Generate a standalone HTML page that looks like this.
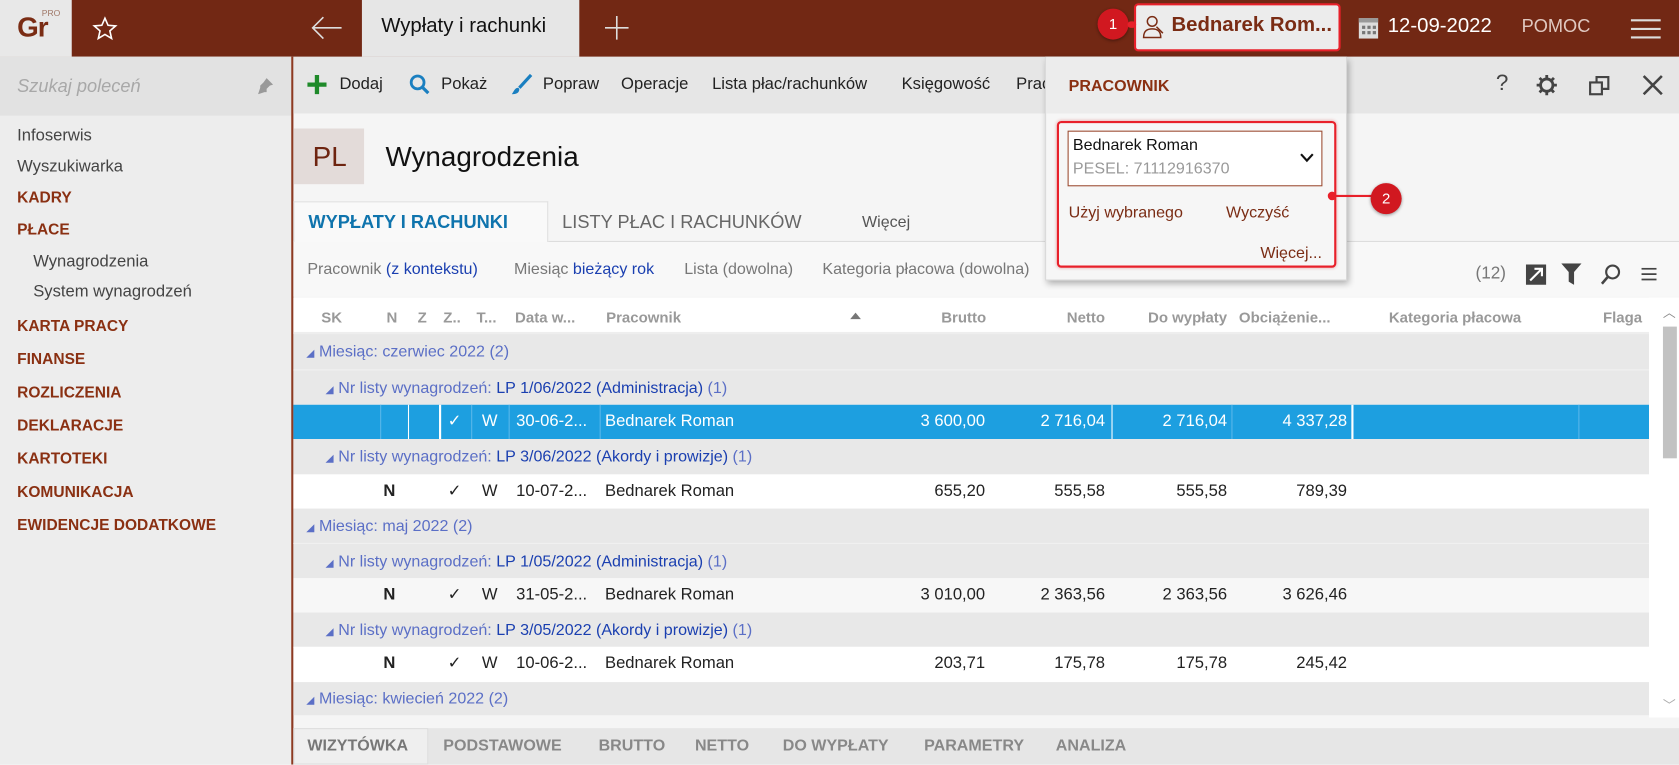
<!DOCTYPE html>
<html><head><meta charset="utf-8"><style>
*{box-sizing:border-box;margin:0;padding:0}
html,body{width:1679px;height:764px;overflow:hidden;background:#f5f5f5}
#w{position:absolute;left:0;top:0;width:1568px;height:714px;transform:scale(1.07079);transform-origin:0 0;font-family:"Liberation Sans",sans-serif;color:#222;background:#f5f5f5}
.a{position:absolute;white-space:nowrap}
.top{left:0;top:0;width:1568px;height:53px;background:#722814}
.sb{left:0;top:53px;width:272px;height:661px;background:#ededed}
.br{color:#8a3012;font-size:14.5px;font-weight:bold}
.g{color:#444;font-size:15.5px}
.hd{font-size:14px;color:#999;font-weight:bold}
.row{position:absolute;left:274px;width:1266px;height:33px}
.grp{background:#e8e8e8;color:#5b6fc6;font-size:15px;line-height:33px}
.grp b{font-weight:normal;color:#1a3fb0}
.cell{position:absolute;top:0;line-height:32px;font-size:15.5px}
.r{text-align:right}
</style></head><body><div id="w">
<div class="a top"></div>
<div class="a" style="left:0;top:0;width:67px;height:53px;background:#e8e8e8"></div>
<div class="a" style="left:16px;top:10px;font-size:26px;color:#7a2c14;font-weight:bold;letter-spacing:-1px">Gr</div>
<div class="a" style="left:39px;top:8px;font-size:8px;color:#a07868">PRO</div>
<svg class="a" style="left:86px;top:15px" width="24" height="24" viewBox="0 0 24 24"><path d="M12 2l2.9 6.6 7.1.6-5.4 4.7 1.6 7-6.2-3.7-6.2 3.7 1.6-7L2 9.2l7.1-.6z" fill="none" stroke="#fff" stroke-width="1.5"/></svg>
<svg class="a" style="left:289px;top:14px" width="32" height="24" viewBox="0 0 32 24"><path d="M30 12H3M13 2L3 12l10 10" fill="none" stroke="#ddd" stroke-width="1.5"/></svg>
<div class="a" style="left:338px;top:0;width:203px;height:53px;background:#e6e6e6"></div>
<div class="a" style="left:356px;top:14px;font-size:19px;color:#111">Wypłaty i rachunki</div>
<svg class="a" style="left:564px;top:14px" width="24" height="24"><path d="M12 1v22M1 12h22" stroke="#ddd" stroke-width="1.5"/></svg>
<div class="a" style="left:1059px;top:3px;width:193px;height:45px;background:#ececec;border:2px solid #e8202a;border-radius:4px"></div>
<svg class="a" style="left:1066px;top:13px" width="22" height="24" viewBox="0 0 22 24"><circle cx="10" cy="7" r="4.5" fill="none" stroke="#7a2c14" stroke-width="1.4"/><path d="M2 22c0-6 3-8 8-8s8 2 8 8z" fill="none" stroke="#7a2c14" stroke-width="1.4"/><path d="M14 12l6 6" stroke="#7a2c14" stroke-width="1.4"/></svg>
<div class="a" style="left:1094px;top:13px;font-size:19px;font-weight:bold;color:#7a2c14">Bednarek Rom...</div>
<div class="a" style="left:1025px;top:8px;width:29px;height:29px;border-radius:50%;background:#d11820;color:#fff;font-size:14px;text-align:center;line-height:29px;box-shadow:0 1px 3px #0006">1</div>
<div class="a" style="left:1053px;top:20px;width:8px;height:6px;background:#e8202a;border-radius:3px"></div>
<svg class="a" style="left:1268px;top:15px" width="20" height="22"><rect x="1" y="2" width="18" height="19" fill="#ddd"/><rect x="1" y="2" width="18" height="4" fill="#999"/><g fill="#777"><rect x="4" y="9" width="3" height="3"/><rect x="9" y="9" width="3" height="3"/><rect x="14" y="9" width="3" height="3"/><rect x="4" y="14" width="3" height="3"/><rect x="9" y="14" width="3" height="3"/><rect x="14" y="14" width="3" height="3"/></g></svg>
<div class="a" style="left:1296px;top:14px;font-size:19px;color:#fff">12-09-2022</div>
<div class="a" style="left:1421px;top:15px;font-size:17px;color:#e0c8c0">POMOC</div>
<svg class="a" style="left:1523px;top:17px" width="28" height="20"><path d="M0 2h28M0 10h28M0 18h28" stroke="#ddd" stroke-width="2"/></svg>

<div class="a sb"></div>
<div class="a" style="left:0;top:53px;width:272px;height:55px;background:#e2e2e2"></div>
<div class="a" style="left:16px;top:71px;font-size:17px;color:#a8a8a8;font-style:italic">Szukaj poleceń</div>
<svg class="a" style="left:240px;top:72px" width="16" height="16"><path d="M9 1l6 6-3 1-3 3 0 3-2 0-6 2 2-6 0-2 3-3z" fill="#999"/></svg>
<div class="a" style="left:272px;top:53px;width:2px;height:661px;background:#8d3a22"></div>
<div class="a g" style="left:16px;top:118px">Infoserwis</div>
<div class="a g" style="left:16px;top:147px">Wyszukiwarka</div>
<div class="a br" style="left:16px;top:177px">KADRY</div>
<div class="a br" style="left:16px;top:207px">PŁACE</div>
<div class="a g" style="left:31px;top:236px">Wynagrodzenia</div>
<div class="a g" style="left:31px;top:264px">System wynagrodzeń</div>
<div class="a br" style="left:16px;top:297px">KARTA PRACY</div>
<div class="a br" style="left:16px;top:328px">FINANSE</div>
<div class="a br" style="left:16px;top:359px">ROZLICZENIA</div>
<div class="a br" style="left:16px;top:390px">DEKLARACJE</div>
<div class="a br" style="left:16px;top:421px">KARTOTEKI</div>
<div class="a br" style="left:16px;top:452px">KOMUNIKACJA</div>
<div class="a br" style="left:16px;top:483px">EWIDENCJE DODATKOWE</div>

<div class="a" style="left:274px;top:53px;width:1294px;height:53px;background:#e6e6e6"></div>
<svg class="a" style="left:287px;top:70px" width="18" height="18"><path d="M9 0v18M0 9h18" stroke="#1f8a2a" stroke-width="4"/></svg>
<div class="a" style="left:317px;top:70px;font-size:15.5px">Dodaj</div>
<svg class="a" style="left:382px;top:69px" width="20" height="20"><circle cx="8" cy="8" r="6" fill="none" stroke="#1a7fc0" stroke-width="2.6"/><path d="M12 12l6 6" stroke="#1a7fc0" stroke-width="3"/></svg>
<div class="a" style="left:412px;top:70px;font-size:15.5px">Pokaż</div>
<svg class="a" style="left:476px;top:68px" width="22" height="22"><path d="M20 2L9 14" stroke="#1a7fc0" stroke-width="3"/><path d="M8 14c-3 0-4 3-6 6 4 0 7-1 7-5z" fill="#1a7fc0"/></svg>
<div class="a" style="left:507px;top:70px;font-size:15.5px">Popraw</div>
<div class="a" style="left:580px;top:70px;font-size:15.5px">Operacje</div>
<div class="a" style="left:665px;top:70px;font-size:15.5px">Lista płac/rachunków</div>
<div class="a" style="left:842px;top:70px;font-size:15.5px">Księgowość</div>
<div class="a" style="left:949px;top:70px;font-size:15.5px">Prac</div>
<div class="a" style="left:1397px;top:66px;font-size:21px;color:#444">?</div>
<svg class="a" style="left:1434px;top:69px" width="21" height="21" viewBox="0 0 20 20"><circle cx="10" cy="10" r="5.5" fill="none" stroke="#444" stroke-width="2.5"/><path d="M10 1v4M10 15v4M1 10h4M15 10h4M3.6 3.6l2.8 2.8M13.6 13.6l2.8 2.8M3.6 16.4l2.8-2.8M13.6 6.4l2.8-2.8" stroke="#444" stroke-width="2.5"/></svg>
<svg class="a" style="left:1483px;top:69px" width="22" height="22"><rect x="2" y="8" width="11" height="11" fill="none" stroke="#444" stroke-width="2"/><path d="M8 8V3h11v11h-6" fill="none" stroke="#444" stroke-width="2"/></svg>
<svg class="a" style="left:1534px;top:70px" width="19" height="19"><path d="M1 1l17 17M18 1L1 18" stroke="#444" stroke-width="2.4"/></svg>

<div class="a" style="left:274px;top:120px;width:66px;height:52px;background:#e3dbd9"></div>
<div class="a" style="left:292px;top:131px;font-size:26px;color:#6e2410">PL</div>
<div class="a" style="left:360px;top:131px;font-size:26px;color:#111">Wynagrodzenia</div>

<div class="a" style="left:274px;top:225px;width:1294px;height:1px;background:#ddd"></div>
<div class="a" style="left:274px;top:188px;width:238px;height:38px;background:#f9f9f9;border:1px solid #e0e0e0;border-bottom:none"></div>
<div class="a" style="left:288px;top:198px;font-size:17px;font-weight:bold;color:#0f74ad">WYPŁATY I RACHUNKI</div>
<div class="a" style="left:525px;top:198px;font-size:17px;color:#666">LISTY PŁAC I RACHUNKÓW</div>
<div class="a" style="left:805px;top:199px;font-size:15px;color:#555">Więcej</div>
<div class="a" style="left:274px;top:226px;width:1294px;height:51px;background:#f8f8f8"></div>
<div class="a" style="left:287px;top:243px;font-size:15px;color:#777">Pracownik <span style="color:#1a3fb0">(z kontekstu)</span></div>
<div class="a" style="left:480px;top:243px;font-size:15px;color:#777">Miesiąc <span style="color:#1a3fb0">bieżący rok</span></div>
<div class="a" style="left:639px;top:243px;font-size:15px;color:#777">Lista (dowolna)</div>
<div class="a" style="left:768px;top:243px;font-size:15px;color:#777">Kategoria płacowa (dowolna)</div>
<div class="a" style="left:1378px;top:247px;font-size:16px;color:#777">(12)</div>
<svg class="a" style="left:1425px;top:247px" width="19" height="19"><rect width="19" height="19" fill="#444"/><path d="M4 15L15 4M8 4h7v7" stroke="#fff" stroke-width="2" fill="none"/></svg>
<svg class="a" style="left:1458px;top:246px" width="19" height="20"><path d="M0 0h19l-7 8v12l-5-3V8z" fill="#444"/></svg>
<svg class="a" style="left:1494px;top:246px" width="20" height="20"><circle cx="12" cy="8" r="6" fill="none" stroke="#444" stroke-width="2"/><path d="M8 12l-6 7" stroke="#444" stroke-width="2.4"/></svg>
<svg class="a" style="left:1533px;top:250px" width="14" height="12"><path d="M0 1h14M0 6h14M0 11h14" stroke="#444" stroke-width="1.6"/></svg>

<div class="a" style="left:274px;top:278px;width:1294px;height:34px;background:#fff;border-bottom:2px solid #eee"></div>
<div class="a hd" style="left:300px;top:288px">SK</div>
<div class="a hd" style="left:361px;top:288px">N</div>
<div class="a hd" style="left:390px;top:288px">Z</div>
<div class="a hd" style="left:414px;top:288px">Z..</div>
<div class="a hd" style="left:445px;top:288px">T...</div>
<div class="a hd" style="left:481px;top:288px">Data w...</div>
<div class="a hd" style="left:566px;top:288px">Pracownik</div>
<div class="a" style="left:794px;top:292px;width:0;height:0;border:5px solid transparent;border-bottom:6px solid #777;border-top:0"></div>
<div class="a hd r" style="left:815px;top:288px;width:106px">Brutto</div>
<div class="a hd r" style="left:928px;top:288px;width:104px">Netto</div>
<div class="a hd r" style="left:1040px;top:288px;width:106px">Do wypłaty</div>
<div class="a hd" style="left:1157px;top:288px">Obciążenie...</div>
<div class="a hd" style="left:1297px;top:288px">Kategoria płacowa</div>
<div class="a hd" style="left:1497px;top:288px">Flaga</div>

<div class="row grp" style="top:312px"><span style="padding-left:12px;font-size:10px">◢</span> Miesiąc: czerwiec 2022 (2)</div>
<div class="row grp" style="top:345px;border-top:1px solid #f0f0f0"><span style="padding-left:30px;font-size:10px">◢</span> Nr listy wynagrodzeń: <b>LP 1/06/2022 (Administracja)</b> (1)</div>
<div class="row" style="top:378px;height:32px;background:#1d9fe0;color:#fff">
<div class="a" style="left:107px;top:0;width:1px;height:32px;background:#fff"></div>
<div class="a" style="left:81px;top:0;width:1px;height:32px;background:#59b7ea"></div>
<div class="a" style="left:136px;top:0;width:2px;height:32px;background:#fff"></div>
<div class="a" style="left:166px;top:0;width:1px;height:32px;background:#59b7ea"></div>
<div class="a" style="left:201px;top:0;width:1px;height:32px;background:#59b7ea"></div>
<div class="a" style="left:286px;top:0;width:1px;height:32px;background:#59b7ea"></div>
<div class="a" style="left:764px;top:0;width:1px;height:32px;background:#fff"></div>
<div class="a" style="left:876px;top:0;width:1px;height:32px;background:#59b7ea"></div>
<div class="a" style="left:988px;top:0;width:2px;height:32px;background:#fff"></div>
<div class="a" style="left:1200px;top:0;width:1px;height:32px;background:#59b7ea"></div>
<div class="cell" style="left:144px">✓</div><div class="cell" style="left:176px">W</div><div class="cell" style="left:208px">30-06-2...</div><div class="cell" style="left:291px">Bednarek Roman</div>
<div class="cell r" style="left:540px;width:106px">3 600,00</div><div class="cell r" style="left:654px;width:104px">2 716,04</div><div class="cell r" style="left:766px;width:106px">2 716,04</div><div class="cell r" style="left:878px;width:106px">4 337,28</div></div>
<div class="row grp" style="top:410px"><span style="padding-left:30px;font-size:10px">◢</span> Nr listy wynagrodzeń: <b>LP 3/06/2022 (Akordy i prowizje)</b> (1)</div>
<div class="row" style="top:443px;height:32px;background:#fff">
<div class="cell" style="left:84px;font-weight:bold">N</div><div class="cell" style="left:144px">✓</div><div class="cell" style="left:176px">W</div><div class="cell" style="left:208px">10-07-2...</div><div class="cell" style="left:291px">Bednarek Roman</div>
<div class="cell r" style="left:540px;width:106px">655,20</div><div class="cell r" style="left:654px;width:104px">555,58</div><div class="cell r" style="left:766px;width:106px">555,58</div><div class="cell r" style="left:878px;width:106px">789,39</div></div>
<div class="row grp" style="top:475px"><span style="padding-left:12px;font-size:10px">◢</span> Miesiąc: maj 2022 (2)</div>
<div class="row grp" style="top:507px;border-top:1px solid #f0f0f0"><span style="padding-left:30px;font-size:10px">◢</span> Nr listy wynagrodzeń: <b>LP 1/05/2022 (Administracja)</b> (1)</div>
<div class="row" style="top:540px;height:32px;background:#f7f7f7">
<div class="cell" style="left:84px;font-weight:bold">N</div><div class="cell" style="left:144px">✓</div><div class="cell" style="left:176px">W</div><div class="cell" style="left:208px">31-05-2...</div><div class="cell" style="left:291px">Bednarek Roman</div>
<div class="cell r" style="left:540px;width:106px">3 010,00</div><div class="cell r" style="left:654px;width:104px">2 363,56</div><div class="cell r" style="left:766px;width:106px">2 363,56</div><div class="cell r" style="left:878px;width:106px">3 626,46</div></div>
<div class="row grp" style="top:572px"><span style="padding-left:30px;font-size:10px">◢</span> Nr listy wynagrodzeń: <b>LP 3/05/2022 (Akordy i prowizje)</b> (1)</div>
<div class="row" style="top:604px;height:33px;background:#fff">
<div class="cell" style="left:84px;font-weight:bold">N</div><div class="cell" style="left:144px">✓</div><div class="cell" style="left:176px">W</div><div class="cell" style="left:208px">10-06-2...</div><div class="cell" style="left:291px">Bednarek Roman</div>
<div class="cell r" style="left:540px;width:106px">203,71</div><div class="cell r" style="left:654px;width:104px">175,78</div><div class="cell r" style="left:766px;width:106px">175,78</div><div class="cell r" style="left:878px;width:106px">245,42</div></div>
<div class="row grp" style="top:637px;height:31px;line-height:31px"><span style="padding-left:12px;font-size:10px">◢</span> Miesiąc: kwiecień 2022 (2)</div>

<div class="a" style="left:1540px;top:278px;width:28px;height:392px;background:#fff"></div>
<div class="a" style="left:1553px;top:283px;font-size:12px;color:#888">︿</div>
<div class="a" style="left:1553px;top:305px;width:13px;height:123px;background:#c2c2c2"></div>
<div class="a" style="left:1553px;top:650px;font-size:12px;color:#aaa">﹀</div>

<div class="a" style="left:274px;top:680px;width:1294px;height:34px;background:#e6e6e6"></div>
<div class="a" style="left:274px;top:680px;width:126px;height:34px;background:#efefef;border:1px solid #ddd"></div>
<div class="a" style="left:287px;top:688px;font-size:15px;font-weight:bold;color:#777">WIZYTÓWKA</div>
<div class="a" style="left:414px;top:688px;font-size:15px;font-weight:bold;color:#888">PODSTAWOWE</div>
<div class="a" style="left:559px;top:688px;font-size:15px;font-weight:bold;color:#888">BRUTTO</div>
<div class="a" style="left:649px;top:688px;font-size:15px;font-weight:bold;color:#888">NETTO</div>
<div class="a" style="left:731px;top:688px;font-size:15px;font-weight:bold;color:#888">DO WYPŁATY</div>
<div class="a" style="left:863px;top:688px;font-size:15px;font-weight:bold;color:#888">PARAMETRY</div>
<div class="a" style="left:986px;top:688px;font-size:15px;font-weight:bold;color:#888">ANALIZA</div>

<div class="a" style="left:976px;top:53px;width:282px;height:209px;background:#f6f6f6;border:1px solid #d8d8d8;box-shadow:2px 3px 6px rgba(0,0,0,.3)"></div>
<div class="a" style="left:977px;top:53px;width:280px;height:53px;background:#ececec"></div>
<div class="a" style="left:998px;top:72px;font-size:15px;color:#8a3012;font-weight:bold">PRACOWNIK</div>
<div class="a" style="left:987px;top:113px;width:261px;height:137px;border:2px solid #e8202a;border-radius:4px;box-shadow:0 0 3px rgba(200,0,0,.3)"></div>
<div class="a" style="left:997px;top:122px;width:238px;height:52px;background:#fff;border:1px solid #9a4a30"></div>
<div class="a" style="left:1002px;top:127px;font-size:15px;color:#111">Bednarek Roman</div>
<div class="a" style="left:1002px;top:149px;font-size:15px;color:#999">PESEL: 71112916370</div>
<svg class="a" style="left:1214px;top:143px" width="13" height="9"><path d="M1 1l5.5 6L12 1" fill="none" stroke="#111" stroke-width="2"/></svg>
<div class="a" style="left:998px;top:190px;font-size:15px;color:#7a2c14">Użyj wybranego</div>
<div class="a" style="left:1145px;top:190px;font-size:15px;color:#7a2c14">Wyczyść</div>
<div class="a" style="left:1177px;top:228px;font-size:15px;color:#7a2c14">Więcej...</div>
<div class="a" style="left:1243px;top:182px;width:40px;height:2px;background:#e8202a"></div>
<div class="a" style="left:1240px;top:179px;width:8px;height:8px;border-radius:50%;background:#e8202a"></div>
<div class="a" style="left:1280px;top:171px;width:29px;height:29px;border-radius:50%;background:#d11820;color:#fff;font-size:14px;text-align:center;line-height:29px;box-shadow:0 1px 3px #0006">2</div>
</div></body></html>
